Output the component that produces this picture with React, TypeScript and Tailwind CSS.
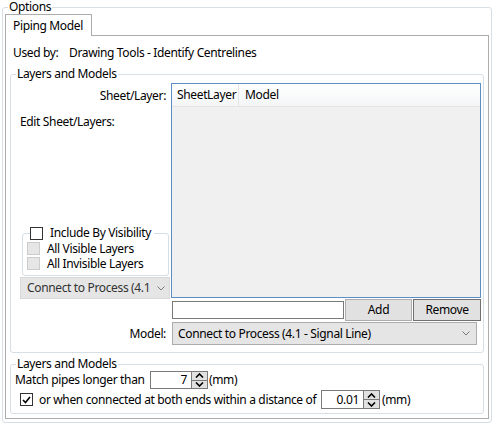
import React from 'react'

const Chevron = () => (
  <svg width="8" height="5" viewBox="0 0 8 5" className="shrink-0">
    <path d="M0.5 0.5 L4 4 L7.5 0.5" fill="none" stroke="#7a7a7a" strokeWidth="1" />
  </svg>
)

const Spinner = () => (
  <div className="flex h-full w-[17px] flex-col border border-[#7a7a7a] bg-[#e1e1e1]">
    <div className="flex flex-1 items-center justify-center border-b border-[#7a7a7a]">
      <svg width="9" height="5" viewBox="0 0 9 5">
        <path d="M1 4.5 L4.5 1 L8 4.5" fill="none" stroke="#000" strokeWidth="1.6" />
      </svg>
    </div>
    <div className="flex flex-1 items-center justify-center">
      <svg width="9" height="5" viewBox="0 0 9 5">
        <path d="M1 0.5 L4.5 4 L8 0.5" fill="none" stroke="#000" strokeWidth="1.6" />
      </svg>
    </div>
  </div>
)

const Check = ({ checked, disabled }: { checked?: boolean; disabled?: boolean }) => (
  <div
    className={`flex h-[13px] w-[13px] shrink-0 items-center justify-center border ${
      disabled ? 'border-[#cccccc] bg-[#e6e6e6]' : 'border-[#333333] bg-white'
    }`}
  >
    {checked && (
      <svg width="9" height="8" viewBox="0 0 9 8">
        <path d="M1 4 L3.5 6.5 L8 1" fill="none" stroke="#000" strokeWidth="1.6" />
      </svg>
    )}
  </div>
)

export default function App() {
  return (
    <div className="h-[424px] w-[493px] overflow-hidden whitespace-nowrap bg-white font-['Noto_Sans',sans-serif] text-[12px] tracking-[-0.35px] text-black">
      <fieldset className="ml-[2px] h-[423px] w-[490px] rounded-[3px] border border-[#d5dfe5]">
        <legend className="ml-[5px] px-[1px] leading-[14px]">Options</legend>

        {/* tab control */}
        <div className="px-[2px]">
          <div className="relative z-10 -mb-px flex h-[22px] w-[87px] items-center border border-b-0 border-[#acacac] bg-white pl-[7px]">
            Piping Model
          </div>
          <div className="h-[384px] border border-[#acacac] px-[4px] pt-[9px]">
            <div className="flex h-[16px] items-center pl-[3px]">
              <span className="w-[56px]">Used by:</span>
              <span>Drawing Tools - Identify Centrelines</span>
            </div>

            {/* group 1 */}
            <fieldset className="mt-[6px] rounded-[3px] border border-[#d5dfe5] pt-[2px] pb-[7px]">
              <legend className="ml-[5px] px-[1px] leading-[14px]">Layers and Models</legend>

              <div className="flex h-[216px] items-start">
                <div className="flex h-full w-[160px] flex-col">
                  <div className="mt-[5px] h-[16px] pr-[5px] text-right leading-[16px]">Sheet/Layer:</div>
                  <div className="mt-[10px] h-[16px] pl-[9px] leading-[16px]">Edit Sheet/Layers:</div>

                  <div className="mt-auto">
                    <fieldset className="ml-[11px] h-[51px] w-[147px] rounded-[3px] border border-[#d5dfe5]">
                      <legend className="ml-[7px] flex h-[16px] items-center pr-[3px]">
                        <Check />
                        <span className="ml-[7px]">Include By Visibility</span>
                      </legend>
                      <div className="flex h-[15px] items-center pl-[4px]">
                        <Check disabled />
                        <span className="ml-[7px]">All Visible Layers</span>
                      </div>
                      <div className="flex h-[15px] items-center pl-[4px]">
                        <Check disabled />
                        <span className="ml-[7px]">All Invisible Layers</span>
                      </div>
                    </fieldset>
                    <div className="mt-[1px] ml-[9px] flex h-[22px] w-[150px] items-center overflow-hidden border border-[#d9d9d9] bg-[#e5e5e5] pr-[4px] pl-[6px]">
                      <span className="flex-1 overflow-hidden text-[#333333]">Connect to Process (4.1</span>
                      <Chevron />
                    </div>
                  </div>
                </div>

                {/* list view */}
                <div className="flex h-[215px] w-[310px] flex-col border border-[#5e8dc4] bg-[#f0f0f0]">
                  <div className="flex h-[23px] border-b border-[#e5e5e5] bg-gradient-to-b from-white to-[#f4f5f7]">
                    <div className="flex w-[67px] items-center border-r border-[#e5e5e5] pl-[5px]">SheetLayer</div>
                    <div className="flex items-center pl-[6px]">Model</div>
                  </div>
                </div>
              </div>

              {/* input row */}
              <div className="flex h-[22px] items-center pl-[161px]">
                <div className="h-[18px] w-[172px] border border-[#7a7a7a] bg-white" />
                <button className="ml-[1px] h-[22px] w-[67px] border border-[#adadad] bg-[#e1e1e1]">Add</button>
                <button className="ml-[1px] h-[22px] w-[68px] border border-[#707070] bg-[#e1e1e1]">Remove</button>
              </div>

              {/* model row */}
              <div className="mt-[1px] flex h-[23px] items-center">
                <div className="w-[160px] pr-[5px] text-right">Model:</div>
                <div className="ml-[1px] flex h-[23px] w-[305px] items-center border border-[#acacac] bg-[#e5e5e5] pr-[6px] pl-[5px]">
                  <span className="flex-1">Connect to Process (4.1 - Signal Line)</span>
                  <Chevron />
                </div>
              </div>
            </fieldset>

            {/* group 2 */}
            <fieldset className="mt-[4px] h-[57px] rounded-[3px] border border-[#d5dfe5]">
              <legend className="ml-[5px] px-[1px] leading-[14px]">Layers and Models</legend>
              <div className="flex h-[18px] items-center pl-[4px]">
                <span className="w-[135px]">Match pipes longer than</span>
                <div className="flex h-[18px] items-stretch">
                  <div className="flex w-[41px] items-center justify-end border border-r-0 border-[#7a7a7a] pr-[4px]">7</div>
                  <Spinner />
                </div>
                <span className="ml-[1px]">(mm)</span>
              </div>
              <div className="mt-[1px] flex h-[19px] items-center pl-[9px]">
                <Check checked />
                <span className="ml-[6px] w-[282px]">or when connected at both ends within a distance of</span>
                <div className="flex h-[19px] items-stretch">
                  <div className="flex w-[42px] items-center justify-end border border-r-0 border-[#7a7a7a] pr-[4px]">0.01</div>
                  <Spinner />
                </div>
                <span className="ml-[2px]">(mm)</span>
              </div>
            </fieldset>
          </div>
        </div>
      </fieldset>
    </div>
  )
}
